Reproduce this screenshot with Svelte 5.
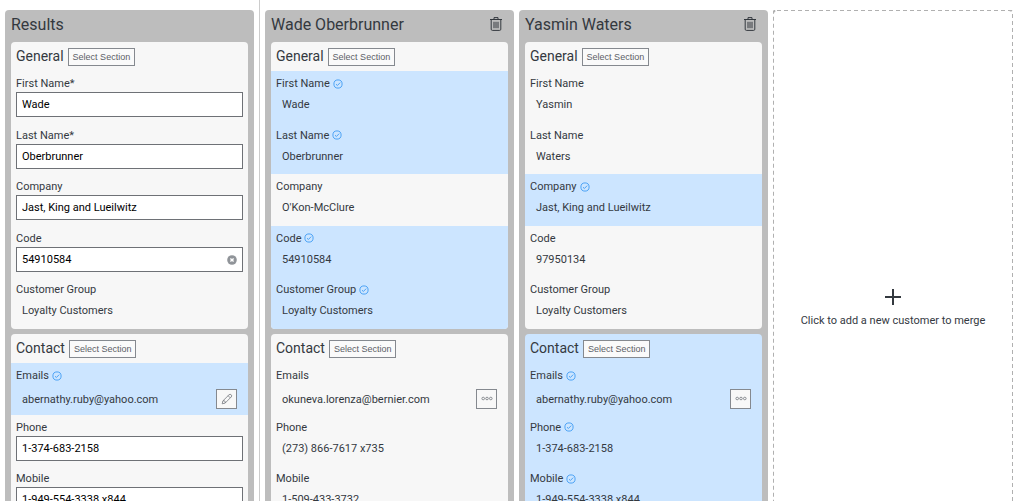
<script>
  const rows = (items) => items.map(([label, value, opts = {}]) => ({ label, value, ...opts }));
  const on = { selected: true };

  const columns = [
    {
      title: 'Results',
      result: true,
      sections: [
        {
          title: 'General',
          fields: rows([
            ['First Name*', 'Wade', { input: true }],
            ['Last Name*', 'Oberbrunner', { input: true }],
            ['Company', 'Jast, King and Lueilwitz', { input: true }],
            ['Code', '54910584', { input: true, clear: true }],
            ['Customer Group', 'Loyalty Customers']
          ])
        },
        {
          title: 'Contact',
          fields: rows([
            ['Emails', 'abernathy.ruby@yahoo.com', { selected: true, action: 'edit' }],
            ['Phone', '1-374-683-2158', { input: true }],
            ['Mobile', '1-949-554-3338 x844', { input: true }]
          ])
        }
      ]
    },
    {
      title: 'Wade Oberbrunner',
      sections: [
        {
          title: 'General',
          fields: rows([
            ['First Name', 'Wade', on],
            ['Last Name', 'Oberbrunner', on],
            ['Company', 'O\'Kon-McClure'],
            ['Code', '54910584', on],
            ['Customer Group', 'Loyalty Customers', on]
          ])
        },
        {
          title: 'Contact',
          fields: rows([
            ['Emails', 'okuneva.lorenza@bernier.com', { action: 'more' }],
            ['Phone', '(273) 866-7617 x735'],
            ['Mobile', '1-509-433-3732']
          ])
        }
      ]
    },
    {
      title: 'Yasmin Waters',
      sections: [
        {
          title: 'General',
          fields: rows([
            ['First Name', 'Yasmin'],
            ['Last Name', 'Waters'],
            ['Company', 'Jast, King and Lueilwitz', on],
            ['Code', '97950134'],
            ['Customer Group', 'Loyalty Customers']
          ])
        },
        {
          title: 'Contact',
          selected: true,
          fields: rows([
            ['Emails', 'abernathy.ruby@yahoo.com', { selected: true, action: 'more' }],
            ['Phone', '1-374-683-2158', on],
            ['Mobile', '1-949-554-3338 x844', on]
          ])
        }
      ]
    }
  ];
</script>

{#snippet check()}
  <svg class="check" viewBox="0 0 10 10" aria-hidden="true">
    <circle cx="5" cy="5" r="4.1" />
    <path d="M3 5.2 4.4 6.5 7.2 3.6" />
  </svg>
{/snippet}

{#snippet body(field, id)}
  {#if field.input}
    <label class="label" for={id}>{field.label}</label>
    <div class="box">
      <input {id} type="text" value={field.value} />
      {#if field.clear}
        <button class="clear" type="button" aria-label="Clear">
          <svg viewBox="0 0 10 10"><circle cx="5" cy="5" r="4.8" /><path d="M3.4 3.4 6.6 6.6M6.6 3.4 3.4 6.6" /></svg>
        </button>
      {/if}
    </div>
  {:else}
    <div class="label">{field.label}{#if field.selected}{@render check()}{/if}</div>
    <div class="value" class:tall={field.action}>
      <span>{field.value}</span>
      {#if field.action === 'edit'}
        <button class="action" type="button" aria-label="Edit">
          <svg viewBox="0 0 12 12">
            <path d="M1.2 10.8 1.9 7.9 8 1.8a1.5 1.5 0 0 1 2.2 2.2L4.1 10.1ZM1.9 7.9a1.6 1.6 0 0 1 2.2 2.2M7.1 2.7l2.2 2.2" />
          </svg>
        </button>
      {:else if field.action === 'more'}
        <button class="action" type="button" aria-label="More">
          <svg viewBox="0 0 12 12">
            <circle cx="2.2" cy="5.5" r="1.3" /><circle cx="6" cy="5.5" r="1.3" /><circle cx="9.8" cy="5.5" r="1.3" />
          </svg>
        </button>
      {/if}
    </div>
  {/if}
{/snippet}

<main>
  {#each columns as column, c}
    <div class="slot" class:result={column.result}>
      <article>
        <header>
          <h2>{column.title}</h2>
          {#if !column.result}
            <button class="trash" type="button" aria-label="Remove">
              <svg viewBox="0 0 12 14">
                <path d="M0 2.5H12M4 2.3V.6H8V2.3M1.2 2.7V12.2Q1.2 13.4 2.4 13.4H9.6Q10.8 13.4 10.8 12.2V2.7M4 4.8V11.2M6 4.8V11.2M8 4.8V11.2" />
              </svg>
            </button>
          {/if}
        </header>
        {#each column.sections as section, s}
          <section class:selected={section.selected}>
            <div class="heading">
              <h3>{section.title}</h3>
              <button class="select" type="button">Select Section</button>
            </div>
            <div class="fields" class:short={section.fields.length === 3}>
              {#each section.fields as field, f}
                <div class="field" class:selected={field.selected}>
                  {@render body(field, `field-${c}-${s}-${f}`)}
                </div>
              {/each}
            </div>
          </section>
        {/each}
      </article>
    </div>
  {/each}
  <button class="add" type="button">
    <svg class="outline" aria-hidden="true"><rect width="100%" height="100%" rx="4" /></svg>
    <svg class="plus" viewBox="0 0 16 16" aria-hidden="true"><path d="M8 0V16M0 8H16" /></svg>
    <span>Click to add a new customer to merge</span>
  </button>
</main>

<style>
  :global(body) {
    background: #fff;
    overflow: hidden;
  }
  main {
    box-sizing: border-box;
    display: grid;
    grid-template-columns: 255fr 249fr 249fr 240fr;
    column-gap: 5px;
    min-height: 121vh;
    padding: 10px 11px 0 5px;
    font-family: Roboto, sans-serif;
    font-size: 11px;
    color: #34393f;
  }
  * {
    box-sizing: border-box;
  }
  h2,
  h3 {
    margin: 0;
    font-weight: 400;
  }
  button {
    padding: 0;
    color: inherit;
    font: inherit;
  }
  svg {
    display: block;
    fill: none;
    stroke: currentColor;
  }
  .slot {
    display: flex;
    min-width: 0;
  }
  .result {
    margin-top: -10px;
    padding: 10px 5px 0 0;
    border-right: 1px solid #ccc;
  }
  article {
    flex: 1;
    min-width: 0;
    padding: 0 6px;
    background: #bdbdbd;
    border-radius: 4px;
  }
  header {
    display: flex;
    justify-content: space-between;
    align-items: flex-start;
    height: 32px;
    padding-right: 6px;
  }
  h2 {
    font-size: 16px;
    line-height: 29px;
  }
  .trash {
    padding-top: 7px;
    border: 0;
    background: none;
  }
  .trash svg {
    width: 12px;
    height: 14px;
  }
  section {
    margin-bottom: 5px;
    overflow: hidden;
    background: #f7f7f7;
    border-radius: 4px;
  }
  .heading {
    display: flex;
    align-items: center;
    gap: 4px;
    height: 29px;
    padding-left: 5px;
  }
  h3 {
    padding-bottom: 2px;
    font-size: 14px;
    line-height: 26px;
  }
  .select {
    height: 18px;
    padding: 0 4px;
    border: 1px solid #85898f;
    background: #fafafa;
    color: #5c6066;
    font: 9px/16px "Liberation Sans", Arial, sans-serif;
  }
  .fields {
    display: grid;
    grid-auto-rows: 1fr;
    min-height: 258px;
  }
  .short {
    min-height: 155px;
  }
  .field {
    padding: 4px 5px 0;
  }
  .selected {
    background: #cce5ff;
  }
  .label {
    display: flex;
    align-items: center;
    gap: 3px;
    height: 17px;
  }
  .check {
    width: 10px;
    height: 10px;
    stroke: #4da3f5;
  }
  .value {
    display: flex;
    align-items: center;
    justify-content: space-between;
    height: 25px;
    padding: 0 6px;
  }
  .tall {
    height: 30px;
  }
  .box {
    position: relative;
  }
  input {
    display: block;
    width: 100%;
    height: 25px;
    padding: 0 5px;
    border: 1px solid #6e7176;
    border-radius: 0;
    background: #fff;
    color: #000;
    font: inherit;
  }
  .clear {
    position: absolute;
    top: 8px;
    right: 6px;
    border: 0;
    background: none;
  }
  .clear svg {
    width: 10px;
    height: 10px;
    stroke: #fff;
    stroke-width: 1.4;
  }
  .clear circle {
    fill: #909499;
    stroke: none;
  }
  .action {
    display: grid;
    place-items: center;
    width: 21px;
    height: 20px;
    border: 1px solid #85898f;
    background: #f8f8f8;
    color: #75797f;
  }
  .action svg {
    width: 12px;
    height: 12px;
    stroke-width: 0.8;
  }
  .add {
    position: relative;
    display: flex;
    flex-direction: column;
    align-items: center;
    justify-content: center;
    gap: 9px;
    border: 0;
    background: #fff;
  }
  .outline {
    position: absolute;
    inset: 0;
    width: 100%;
    height: 100%;
    stroke: #b0b0b0;
    stroke-width: 2;
    stroke-dasharray: 4 3;
  }
  .plus {
    width: 16px;
    height: 16px;
    stroke-width: 2;
  }
</style>
